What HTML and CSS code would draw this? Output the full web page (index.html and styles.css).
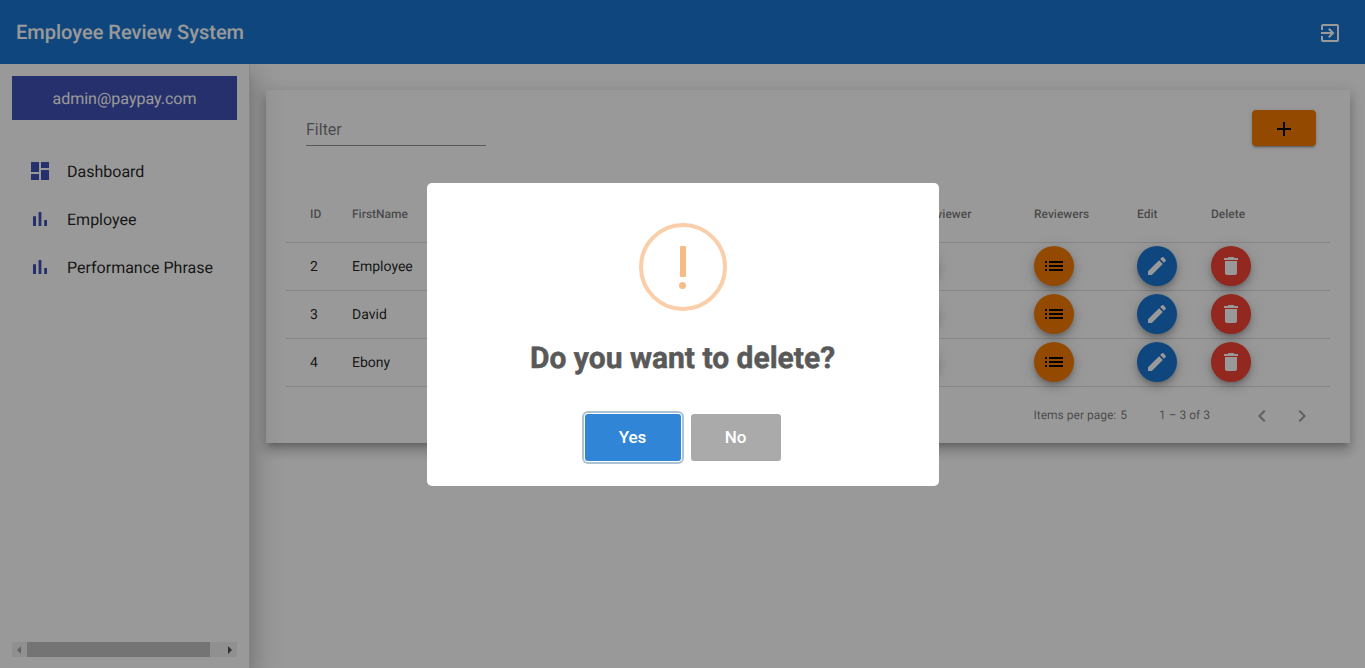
FILE: index.html
```html
<!DOCTYPE html>
<html lang="en">
<head>
  <meta charset="UTF-8">
  <title>Employee Review System</title>
  <link rel="stylesheet" href="styles.css">
</head>
<body>
  <header class="topbar">
    <span class="topbar-title">Employee Review System</span>
    <button class="logout">
      <svg viewBox="0 0 24 24" width="24" height="24"><path d="M10.09 15.59L11.5 17l5-5-5-5-1.41 1.41L12.67 11H3v2h9.67l-2.58 2.59zM19 3H5c-1.11 0-2 .9-2 2v4h2V5h14v14H5v-4H3v4c0 1.1.89 2 2 2h14c1.1 0 2-.9 2-2V5c0-1.1-.9-2-2-2z"/></svg>
    </button>
  </header>

  <div class="layout">
    <aside class="sidebar">
      <div class="user-box">admin@paypay.com</div>
      <nav class="nav">
        <a class="nav-item">
          <svg viewBox="0 0 24 24" width="24" height="24"><path d="M3 13h8V3H3v10zm0 8h8v-6H3v6zm10 0h8V11h-8v10zm0-18v6h8V3h-8z"/></svg>
          Dashboard
        </a>
        <a class="nav-item">
          <svg viewBox="0 0 24 24" width="24" height="24"><path d="M5 9.2h3V19H5zM10.6 5h2.8v14h-2.8zm5.6 8H19v6h-2.8z"/></svg>
          Employee
        </a>
        <a class="nav-item">
          <svg viewBox="0 0 24 24" width="24" height="24"><path d="M5 9.2h3V19H5zM10.6 5h2.8v14h-2.8zm5.6 8H19v6h-2.8z"/></svg>
          Performance Phrase
        </a>
      </nav>
      <div class="fake-scroll">
        <span class="arrow arrow-left"></span>
        <span class="thumb"></span>
        <span class="arrow arrow-right"></span>
      </div>
    </aside>

    <main class="content">
      <section class="card">
        <div class="toolbar">
          <input class="filter" placeholder="Filter">
          <button class="add-btn">
            <svg viewBox="0 0 24 24" width="24" height="24"><path d="M19 13h-6v6h-2v-6H5v-2h6V5h2v6h6v2z"/></svg>
          </button>
        </div>

        <table class="grid">
          <colgroup>
            <col class="col-id">
            <col class="col-name">
            <col class="col-set">
            <col class="col-reviewers">
            <col class="col-edit">
            <col class="col-delete">
          </colgroup>
          <thead>
            <tr>
              <th>ID</th>
              <th>FirstName</th>
              <th>Add Reviewer</th>
              <th>Reviewers</th>
              <th>Edit</th>
              <th>Delete</th>
            </tr>
          </thead>
          <tbody>
            <tr>
              <td class="cell-text">2</td>
              <td class="cell-text">Employee</td>
              <td><button class="fab fab-blue"></button></td>
              <td><button class="fab fab-orange"><svg viewBox="0 0 24 24" width="24" height="24"><path d="M3 13h2v-2H3v2zm0 4h2v-2H3v2zm0-8h2V7H3v2zm4 4h14v-2H7v2zm0 4h14v-2H7v2zM7 7v2h14V7H7z"/></svg></button></td>
              <td><button class="fab fab-blue"><svg viewBox="0 0 24 24" width="24" height="24"><path d="M3 17.25V21h3.75L17.81 9.94l-3.75-3.75L3 17.25zM20.71 7.04c.39-.39.39-1.02 0-1.41l-2.34-2.34c-.39-.39-1.02-.39-1.41 0l-1.83 1.83 3.75 3.75 1.83-1.83z"/></svg></button></td>
              <td><button class="fab fab-red"><svg viewBox="0 0 24 24" width="24" height="24"><path d="M6 19c0 1.1.9 2 2 2h8c1.1 0 2-.9 2-2V7H6v12zM19 4h-3.5l-1-1h-5l-1 1H5v2h14V4z"/></svg></button></td>
            </tr>
            <tr>
              <td class="cell-text">3</td>
              <td class="cell-text">David</td>
              <td><button class="fab fab-blue"></button></td>
              <td><button class="fab fab-orange"><svg viewBox="0 0 24 24" width="24" height="24"><path d="M3 13h2v-2H3v2zm0 4h2v-2H3v2zm0-8h2V7H3v2zm4 4h14v-2H7v2zm0 4h14v-2H7v2zM7 7v2h14V7H7z"/></svg></button></td>
              <td><button class="fab fab-blue"><svg viewBox="0 0 24 24" width="24" height="24"><path d="M3 17.25V21h3.75L17.81 9.94l-3.75-3.75L3 17.25zM20.71 7.04c.39-.39.39-1.02 0-1.41l-2.34-2.34c-.39-.39-1.02-.39-1.41 0l-1.83 1.83 3.75 3.75 1.83-1.83z"/></svg></button></td>
              <td><button class="fab fab-red"><svg viewBox="0 0 24 24" width="24" height="24"><path d="M6 19c0 1.1.9 2 2 2h8c1.1 0 2-.9 2-2V7H6v12zM19 4h-3.5l-1-1h-5l-1 1H5v2h14V4z"/></svg></button></td>
            </tr>
            <tr>
              <td class="cell-text">4</td>
              <td class="cell-text">Ebony</td>
              <td><button class="fab fab-blue"></button></td>
              <td><button class="fab fab-orange"><svg viewBox="0 0 24 24" width="24" height="24"><path d="M3 13h2v-2H3v2zm0 4h2v-2H3v2zm0-8h2V7H3v2zm4 4h14v-2H7v2zm0 4h14v-2H7v2zM7 7v2h14V7H7z"/></svg></button></td>
              <td><button class="fab fab-blue"><svg viewBox="0 0 24 24" width="24" height="24"><path d="M3 17.25V21h3.75L17.81 9.94l-3.75-3.75L3 17.25zM20.71 7.04c.39-.39.39-1.02 0-1.41l-2.34-2.34c-.39-.39-1.02-.39-1.41 0l-1.83 1.83 3.75 3.75 1.83-1.83z"/></svg></button></td>
              <td><button class="fab fab-red"><svg viewBox="0 0 24 24" width="24" height="24"><path d="M6 19c0 1.1.9 2 2 2h8c1.1 0 2-.9 2-2V7H6v12zM19 4h-3.5l-1-1h-5l-1 1H5v2h14V4z"/></svg></button></td>
            </tr>
          </tbody>
        </table>

        <div class="paginator">
          <span class="per-page">Items per page:</span>
          <span class="per-page-value">5</span>
          <span class="range">1 – 3 of 3</span>
          <button class="page-btn">
            <svg viewBox="0 0 24 24" width="24" height="24"><path d="M15.41 7.41L14 6l-6 6 6 6 1.41-1.41L10.83 12z"/></svg>
          </button>
          <button class="page-btn">
            <svg viewBox="0 0 24 24" width="24" height="24"><path d="M10 6L8.59 7.41 13.17 12l-4.58 4.59L10 18l6-6z"/></svg>
          </button>
        </div>
      </section>
    </main>
  </div>

  <!-- Delete confirm dialog -->
  <div class="overlay">
    <div class="dialog">
      <div class="warn-icon">
        <span class="warn-bar"></span>
        <span class="warn-dot"></span>
      </div>
      <h2 class="dialog-title">Do you want to delete?</h2>
      <div class="dialog-actions">
        <button class="btn-yes">Yes</button>
        <button class="btn-no">No</button>
      </div>
    </div>
  </div>
</body>
</html>
```

FILE: styles.css
```css
* {
  box-sizing: border-box;
}

html, body {
  height: 100%;
}

body {
  margin: 0;
  font-family: Roboto, "Liberation Sans", sans-serif;
  text-rendering: geometricPrecision;
  background: #fff;
  color: rgba(0, 0, 0, 0.87);
  overflow: hidden;
  display: flex;
  flex-direction: column;
}

button {
  font-family: inherit;
  border: none;
  padding: 0;
}

.topbar {
  height: 64px;
  flex: none;
  background: #1976d2;
  color: #fff;
  display: flex;
  align-items: center;
  justify-content: space-between;
  padding: 0 15px 0 16px;
  position: relative;
  z-index: 2;
}

.topbar-title {
  font-size: 20px;
  font-weight: 500;
}

.logout {
  width: 40px;
  height: 40px;
  margin-top: 2px;
  background: none;
  display: flex;
  align-items: center;
  justify-content: center;
}

.logout svg {
  fill: #fff;
}

.layout {
  flex: 1;
  display: flex;
  min-height: 0;
}

.sidebar {
  width: 250px;
  flex: none;
  padding: 12px 12px 11px;
  display: flex;
  flex-direction: column;
  border-right: 1px solid rgba(0, 0, 0, 0.12);
  box-shadow: 0 8px 10px -5px rgba(0, 0, 0, 0.2), 0 16px 24px 2px rgba(0, 0, 0, 0.14), 0 6px 30px 5px rgba(0, 0, 0, 0.12);
  position: relative;
  z-index: 1;
  background: #fff;
}

.user-box {
  height: 44px;
  background: #3f51b5;
  color: #fff;
  font-size: 16px;
  display: flex;
  align-items: center;
  justify-content: center;
}

.nav {
  margin-top: 27px;
  flex: 1;
}

.nav-item {
  height: 48px;
  display: flex;
  align-items: center;
  gap: 15px;
  padding-left: 16px;
  font-size: 16px;
}

.nav-item svg {
  fill: #3f51b5;
}

.fake-scroll {
  height: 15px;
  width: 225px;
  background: #f1f1f1;
  display: flex;
  align-items: center;
}

.thumb {
  width: 183px;
  height: 100%;
  background: #c1c1c1;
}

.arrow {
  width: 0;
  height: 0;
  border-top: 4px solid transparent;
  border-bottom: 4px solid transparent;
}

.arrow-left {
  border-right: 4px solid #a3a3a3;
  margin: 0 6px 0 5px;
}

.arrow-right {
  border-left: 4px solid #505050;
  margin-left: 18px;
}

.content {
  flex: 1;
  padding: 26px 15px 0 16px;
}

.card {
  background: #fff;
  padding: 20px;
  padding-bottom: 0;
  box-shadow: 0 5px 5px -3px rgba(0, 0, 0, 0.2), 0 8px 10px 1px rgba(0, 0, 0, 0.14), 0 3px 14px 2px rgba(0, 0, 0, 0.12);
}

.toolbar {
  display: flex;
  justify-content: space-between;
  padding: 0 14px 0 20px;
  margin-bottom: 40px;
}

.filter {
  width: 180px;
  height: 36px;
  padding: 3px 0 0;
  border: none;
  border-bottom: 1px solid rgba(0, 0, 0, 0.42);
  outline: none;
  font-family: inherit;
  font-size: 16px;
  background: none;
}

.filter::placeholder {
  color: rgba(0, 0, 0, 0.54);
  opacity: 1;
}

.add-btn {
  width: 64px;
  height: 36px;
  padding-top: 1px;
  border-radius: 4px;
  background: #f57c00;
  display: flex;
  align-items: center;
  justify-content: center;
  box-shadow: 0 3px 1px -2px rgba(0, 0, 0, 0.2), 0 2px 2px 0 rgba(0, 0, 0, 0.14), 0 1px 5px 0 rgba(0, 0, 0, 0.12);
}

.grid {
  width: 100%;
  table-layout: fixed;
  border-collapse: collapse;
}

.col-id { width: 66px; }
.col-name { width: 546px; }
.col-set { width: 136px; }
.col-reviewers { width: 103px; }
.col-edit { width: 74px; }
.col-delete { width: 119px; }

.grid th,
.grid td {
  padding: 0;
  text-align: left;
  border-bottom: 1px solid rgba(0, 0, 0, 0.12);
}

.grid th {
  height: 56px;
  font-size: 12px;
  font-weight: 500;
  color: rgba(0, 0, 0, 0.54);
}

.grid td {
  height: 48px;
  font-size: 14px;
}

.grid td.cell-text {
  padding-top: 2px;
}

.grid th:first-child,
.grid td:first-child {
  padding-left: 24px;
}

.fab {
  width: 40px;
  height: 40px;
  border-radius: 50%;
  display: flex;
  align-items: center;
  justify-content: center;
  box-shadow: 0 3px 5px -1px rgba(0, 0, 0, 0.2), 0 6px 10px 0 rgba(0, 0, 0, 0.14), 0 1px 18px 0 rgba(0, 0, 0, 0.12);
}

.fab-orange { background: #f57c00; }
.fab-blue { background: #1976d2; }
.fab-red { background: #f44336; }

.fab-blue svg,
.fab-red svg {
  fill: #fff;
}

.paginator {
  height: 56px;
  display: flex;
  align-items: center;
  justify-content: flex-end;
  padding-right: 8px;
  font-size: 12px;
  color: rgba(0, 0, 0, 0.54);
}

.per-page-value {
  margin-left: 4px;
}

.range {
  margin: 0 32px;
}

.page-btn {
  width: 40px;
  height: 40px;
  margin-top: 2px;
  background: none;
  display: flex;
  align-items: center;
  justify-content: center;
}

.page-btn svg {
  fill: rgba(0, 0, 0, 0.38);
}

.overlay {
  position: fixed;
  top: 0;
  left: 0;
  right: 0;
  bottom: 0;
  z-index: 10;
  background: rgba(0, 0, 0, 0.4);
  display: flex;
  align-items: center;
  justify-content: center;
}

.dialog {
  width: 512px;
  height: 303px;
  padding-top: 40px;
  background: #fff;
  border-radius: 5px;
  display: flex;
  flex-direction: column;
  align-items: center;
}

.warn-icon {
  width: 88px;
  height: 88px;
  flex: none;
  border: 4px solid #facea8;
  border-radius: 50%;
  display: flex;
  flex-direction: column;
  align-items: center;
  padding-top: 19px;
}

.warn-bar {
  width: 6px;
  height: 31px;
  border-radius: 1px;
  background: #f8bb86;
}

.warn-dot {
  width: 7px;
  height: 7px;
  margin-top: 5px;
  border-radius: 50%;
  background: #f8bb86;
}

.dialog-title {
  margin: 30px 0 0;
  font-size: 30px;
  line-height: 36px;
  font-weight: 700;
  -webkit-text-stroke: 0.5px #595959;
  color: #595959;
}

.dialog-actions {
  display: flex;
  gap: 10px;
  margin-top: 37px;
}

.btn-yes,
.btn-no {
  height: 47px;
  border-radius: 3px;
  font-size: 17px;
  font-weight: 500;
  color: #fff;
}

.btn-yes {
  width: 96px;
  background: #3085d6;
  box-shadow: 0 0 0 1px #fff, 0 0 0 3px rgba(50, 100, 150, 0.4);
}

.btn-no {
  width: 90px;
  background: #aaa;
}
```
